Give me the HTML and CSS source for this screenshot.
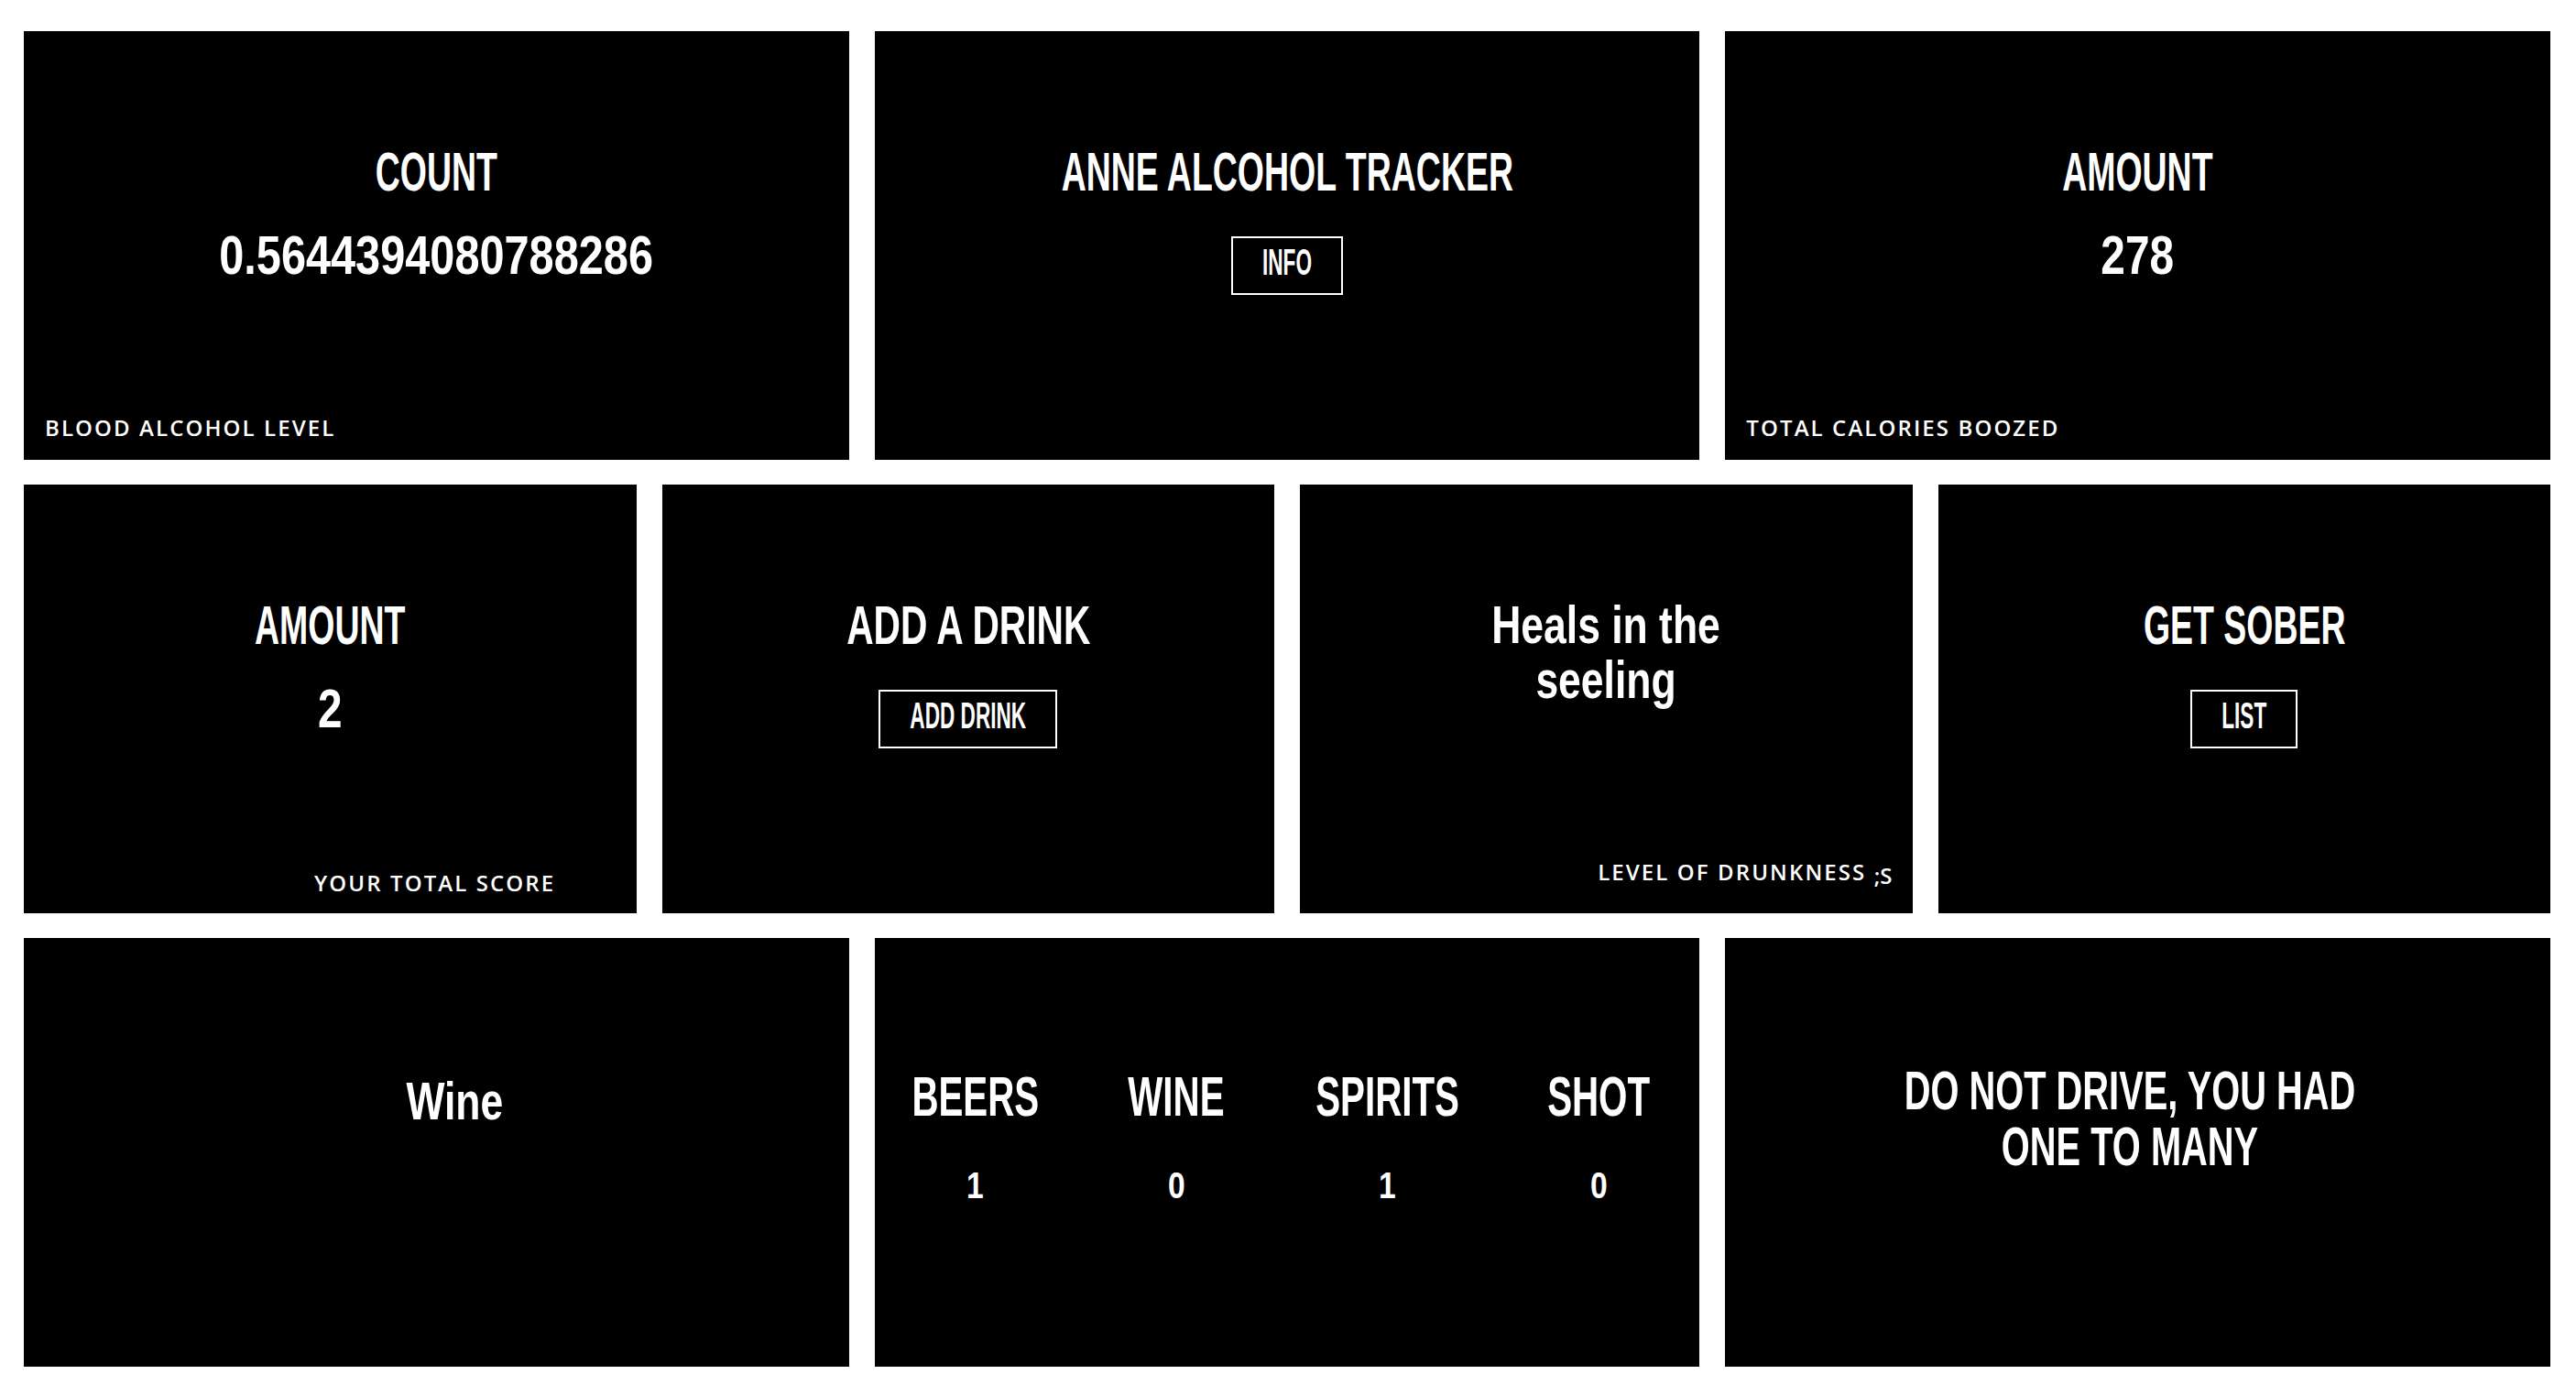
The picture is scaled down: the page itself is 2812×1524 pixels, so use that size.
FILE: index.html
```html
<!DOCTYPE html>
<html lang="en">
<head>
<meta charset="utf-8">
<title>Anne Alcohol Tracker</title>
<link rel="stylesheet" href="styles.css">
</head>
<body>
<main class="board">
  <section class="row row-3">
    <div class="card">
      <h2 class="title">COUNT</h2>
      <div class="value value-long">0.5644394080788286</div>
      <p class="label">BLOOD ALCOHOL LEVEL</p>
    </div>
    <div class="card">
      <h1 class="title">ANNE ALCOHOL TRACKER</h1>
      <button class="btn"><span>INFO</span></button>
    </div>
    <div class="card">
      <h2 class="title">AMOUNT</h2>
      <div class="value">278</div>
      <p class="label">TOTAL CALORIES BOOZED</p>
    </div>
  </section>

  <section class="row row-4">
    <div class="card">
      <h2 class="title">AMOUNT</h2>
      <div class="value">2</div>
      <p class="label label-score">YOUR TOTAL SCORE</p>
    </div>
    <div class="card">
      <h2 class="title title-wide">ADD A DRINK</h2>
      <button class="btn"><span>ADD DRINK</span></button>
    </div>
    <div class="card">
      <h2 class="title title-soft title-wrap">Heals in the seeling</h2>
      <p class="label label-right">LEVEL OF DRUNKNESS <span class="smile">;S</span></p>
    </div>
    <div class="card">
      <h2 class="title">GET SOBER</h2>
      <button class="btn"><span>LIST</span></button>
    </div>
  </section>

  <section class="row row-3">
    <div class="card card-wine">
      <h2 class="title title-soft">Wine</h2>
    </div>
    <div class="card card-stats">
      <div class="stat">
        <h3 class="stat-name">BEERS</h3>
        <div class="stat-num">1</div>
      </div>
      <div class="stat">
        <h3 class="stat-name">WINE</h3>
        <div class="stat-num">0</div>
      </div>
      <div class="stat">
        <h3 class="stat-name">SPIRITS</h3>
        <div class="stat-num">1</div>
      </div>
      <div class="stat">
        <h3 class="stat-name">SHOT</h3>
        <div class="stat-num">0</div>
      </div>
    </div>
    <div class="card card-warn">
      <h2 class="title title-warn">DO NOT DRIVE, YOU HAD ONE TO MANY</h2>
    </div>
  </section>
</main>
</body>
</html>
```

FILE: styles.css
```css
* {
  box-sizing: border-box;
}

html,
body {
  margin: 0;
  background: #ffffff;
}

.board {
  display: flex;
  flex-direction: column;
  gap: 27px;
  padding: 34px 28px 33px 26px;
}

.row {
  display: grid;
  gap: 28px;
  height: 468px;
}

.row-3 {
  grid-template-columns: repeat(3, 1fr);
}

.row-4 {
  grid-template-columns: repeat(4, 1fr);
}

.card {
  background: #000000;
  color: #ffffff;
  display: flex;
  flex-direction: column;
  align-items: center;
  padding-top: 120px;
  overflow: hidden;
}

.title {
  margin: 0;
  width: 100%;
  text-align: center;
  font-family: "Liberation Sans", Arial, sans-serif;
  font-weight: 700;
  font-size: 59px;
  line-height: 68px;
  transform: scaleX(0.635);
}

.title-wide {
  transform: scaleX(0.69);
}

.title-soft {
  font-size: 57px;
  transform: scaleX(0.78);
}

.title-wrap {
  max-width: 420px;
  margin-top: 3px;
  line-height: 60px;
}

.value {
  margin-top: 22px;
  font-family: "Liberation Sans", Arial, sans-serif;
  font-weight: 700;
  font-size: 59px;
  line-height: 70px;
  transform: scaleX(0.81);
}

.value-long {
  transform: scaleX(0.825);
}

.btn {
  margin-top: 36px;
  height: 64px;
  padding: 0 32px 3px;
  border: 2px solid #ffffff;
  background: transparent;
  color: #ffffff;
  display: flex;
  align-items: center;
  justify-content: center;
  font-family: "Liberation Sans", Arial, sans-serif;
  font-weight: 700;
  font-size: 22.6px;
  line-height: 1;
  cursor: pointer;
}

.btn span {
  display: inline-block;
  transform: scaleY(1.8);
}

.label {
  margin: auto 0 19px 23px;
  align-self: flex-start;
  font-family: "Open Sans", "Noto Sans", sans-serif;
  font-weight: 600;
  font-size: 24px;
  line-height: 32px;
  letter-spacing: 2.1px;
  white-space: nowrap;
}

.label-score {
  margin-left: 317px;
  margin-bottom: 17px;
}

.label-right {
  align-self: flex-end;
  margin-left: 0;
  margin-right: 22px;
  margin-bottom: 25px;
}

.smile {
  display: inline-block;
  vertical-align: -4px;
  letter-spacing: 0;
}

.card-wine {
  padding-top: 144px;
  padding-left: 40px;
}

.card-stats {
  display: grid;
  grid-template-columns: repeat(4, 1fr);
  align-content: start;
  align-items: start;
  padding-top: 138px;
}

.stat {
  display: flex;
  flex-direction: column;
  align-items: center;
}

.stat-name {
  margin: 0;
  font-family: "Liberation Sans", Arial, sans-serif;
  font-weight: 700;
  font-size: 62px;
  line-height: 70px;
  transform: scaleX(0.65);
}

.stat-num {
  margin-top: 38px;
  font-family: "Liberation Sans", Arial, sans-serif;
  font-weight: 700;
  font-size: 41px;
  line-height: 48px;
  transform: scaleX(0.82);
}

.card-warn {
  padding-top: 137px;
  padding-right: 18px;
}

.title-warn {
  max-width: 860px;
  line-height: 61px;
  transform: scaleX(0.675);
}
```
